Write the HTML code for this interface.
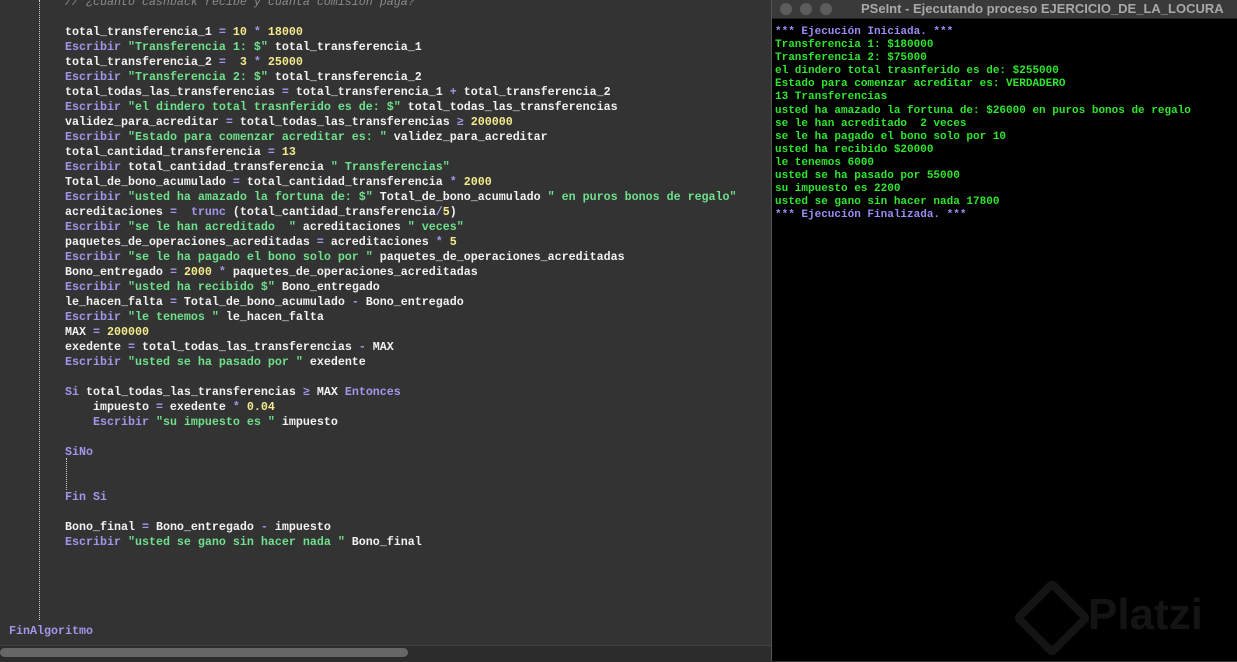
<!DOCTYPE html>
<html><head><meta charset="utf-8"><style>
body{margin:0;width:1237px;height:661px;overflow:hidden;background:#333;position:relative;font-family:"Liberation Mono",monospace}
#ed{position:absolute;left:0;top:0;width:771px;height:661px;background:#333}
pre{margin:0;position:absolute;left:65px;top:-5.5px;font-family:"Liberation Mono",monospace;font-size:11.67px;line-height:15px;color:#f2f2f2;font-weight:bold}
.k{color:#a197ea}.s{color:#6fe08c}.n{color:#f3ea8c}.o{color:#a197ea}.c{color:#8a8a8a;font-style:italic;font-weight:normal}
.dot{position:absolute;border-left:1px dotted #cfcfcf;width:0}
#con{position:absolute;left:771px;top:0;width:466px;height:661px;background:#000;border-left:1px solid #555}
#tb{height:18px;background:#3a3a3a;color:#a8a8a8;font-family:"Liberation Sans",sans-serif;font-weight:bold;font-size:13px;line-height:17px;position:relative;border-bottom:1px solid #222}
.cir{position:absolute;top:3px;width:12px;height:12px;border-radius:50%;background:#5c5c5c}
#out{position:absolute;left:3px;top:25px;font-size:11px;line-height:13.1px;color:#2fe52f;white-space:pre;margin:0;font-family:"Liberation Mono",monospace}
.p{color:#9b8cf5}
</style></head><body>
<div id="ed">
<div class="dot" style="left:39px;top:0;height:620px"></div>
<div class="dot" style="left:66px;top:458px;height:32px"></div>
<pre><span class="c">// ¿cuanto cashback recibe y cuanta comision paga?</span>

total_transferencia_1 <span class="o">=</span> <span class="n">10</span> <span class="o">*</span> <span class="n">18000</span>
<span class="k">Escribir</span> <span class="s">"Transferencia 1: $"</span> total_transferencia_1
total_transferencia_2 <span class="o">=</span>  <span class="n">3</span> <span class="o">*</span> <span class="n">25000</span>
<span class="k">Escribir</span> <span class="s">"Transferencia 2: $"</span> total_transferencia_2
total_todas_las_transferencias <span class="o">=</span> total_transferencia_1 <span class="o">+</span> total_transferencia_2
<span class="k">Escribir</span> <span class="s">"el dindero total trasnferido es de: $"</span> total_todas_las_transferencias
validez_para_acreditar <span class="o">=</span> total_todas_las_transferencias <span class="o">≥</span> <span class="n">200000</span>
<span class="k">Escribir</span> <span class="s">"Estado para comenzar acreditar es: "</span> validez_para_acreditar
total_cantidad_transferencia <span class="o">=</span> <span class="n">13</span>
<span class="k">Escribir</span> total_cantidad_transferencia <span class="s">" Transferencias"</span>
Total_de_bono_acumulado <span class="o">=</span> total_cantidad_transferencia <span class="o">*</span> <span class="n">2000</span>
<span class="k">Escribir</span> <span class="s">"usted ha amazado la fortuna de: $"</span> Total_de_bono_acumulado <span class="s">" en puros bonos de regalo"</span>
acreditaciones <span class="o">=</span>  <span class="k">trunc</span> (total_cantidad_transferencia<span class="o">/</span><span class="n">5</span>)
<span class="k">Escribir</span> <span class="s">"se le han acreditado  "</span> acreditaciones <span class="s">" veces"</span>
paquetes_de_operaciones_acreditadas <span class="o">=</span> acreditaciones <span class="o">*</span> <span class="n">5</span>
<span class="k">Escribir</span> <span class="s">"se le ha pagado el bono solo por "</span> paquetes_de_operaciones_acreditadas
Bono_entregado <span class="o">=</span> <span class="n">2000</span> <span class="o">*</span> paquetes_de_operaciones_acreditadas
<span class="k">Escribir</span> <span class="s">"usted ha recibido $"</span> Bono_entregado
le_hacen_falta <span class="o">=</span> Total_de_bono_acumulado <span class="o">-</span> Bono_entregado
<span class="k">Escribir</span> <span class="s">"le tenemos "</span> le_hacen_falta
MAX <span class="o">=</span> <span class="n">200000</span>
exedente <span class="o">=</span> total_todas_las_transferencias <span class="o">-</span> MAX
<span class="k">Escribir</span> <span class="s">"usted se ha pasado por "</span> exedente

<span class="k">Si</span> total_todas_las_transferencias <span class="o">≥</span> MAX <span class="k">Entonces</span>
    impuesto <span class="o">=</span> exedente <span class="o">*</span> <span class="n">0.04</span>
    <span class="k">Escribir</span> <span class="s">"su impuesto es "</span> impuesto

<span class="k">SiNo</span>


<span class="k">Fin Si</span>

Bono_final <span class="o">=</span> Bono_entregado <span class="o">-</span> impuesto
<span class="k">Escribir</span> <span class="s">"usted se gano sin hacer nada "</span> Bono_final</pre>
<div style="position:absolute;left:9px;top:624px;font-size:11.67px;font-weight:bold;color:#a197ea;line-height:15px">FinAlgoritmo</div>
<div style="position:absolute;left:0;top:645px;width:771px;height:16px;background:#2c2c2c;border-top:1px solid #444"></div>
<div style="position:absolute;left:0;top:648px;width:408px;height:9px;border-radius:5px;background:#666"></div>
</div>
<div id="con">
<div id="tb"><div class="cir" style="left:8px"></div><div class="cir" style="left:28px"></div><div class="cir" style="left:48px"></div><span style="position:absolute;left:89px;top:0">PSeInt - Ejecutando proceso EJERCICIO_DE_LA_LOCURA</span></div>
<pre id="out" style="top:26px"><span class="p">*** Ejecución Iniciada. ***</span>
Transferencia 1: $180000
Transferencia 2: $75000
el dindero total trasnferido es de: $255000
Estado para comenzar acreditar es: VERDADERO
13 Transferencias
usted ha amazado la fortuna de: $26000 en puros bonos de regalo
se le han acreditado  2 veces
se le ha pagado el bono solo por 10
usted ha recibido $20000
le tenemos 6000
usted se ha pasado por 55000
su impuesto es 2200
usted se gano sin hacer nada 17800
<span class="p">*** Ejecución Finalizada. ***</span></pre>
<div style="position:absolute;left:252px;top:590px;width:40px;height:40px;border:8px solid #141414;transform:rotate(45deg);border-radius:6px"></div>
<div style="position:absolute;left:316px;top:590px;font-family:'Liberation Sans',sans-serif;font-size:44px;color:#141414;font-weight:bold">Platzi</div>
</div>
</body></html>
